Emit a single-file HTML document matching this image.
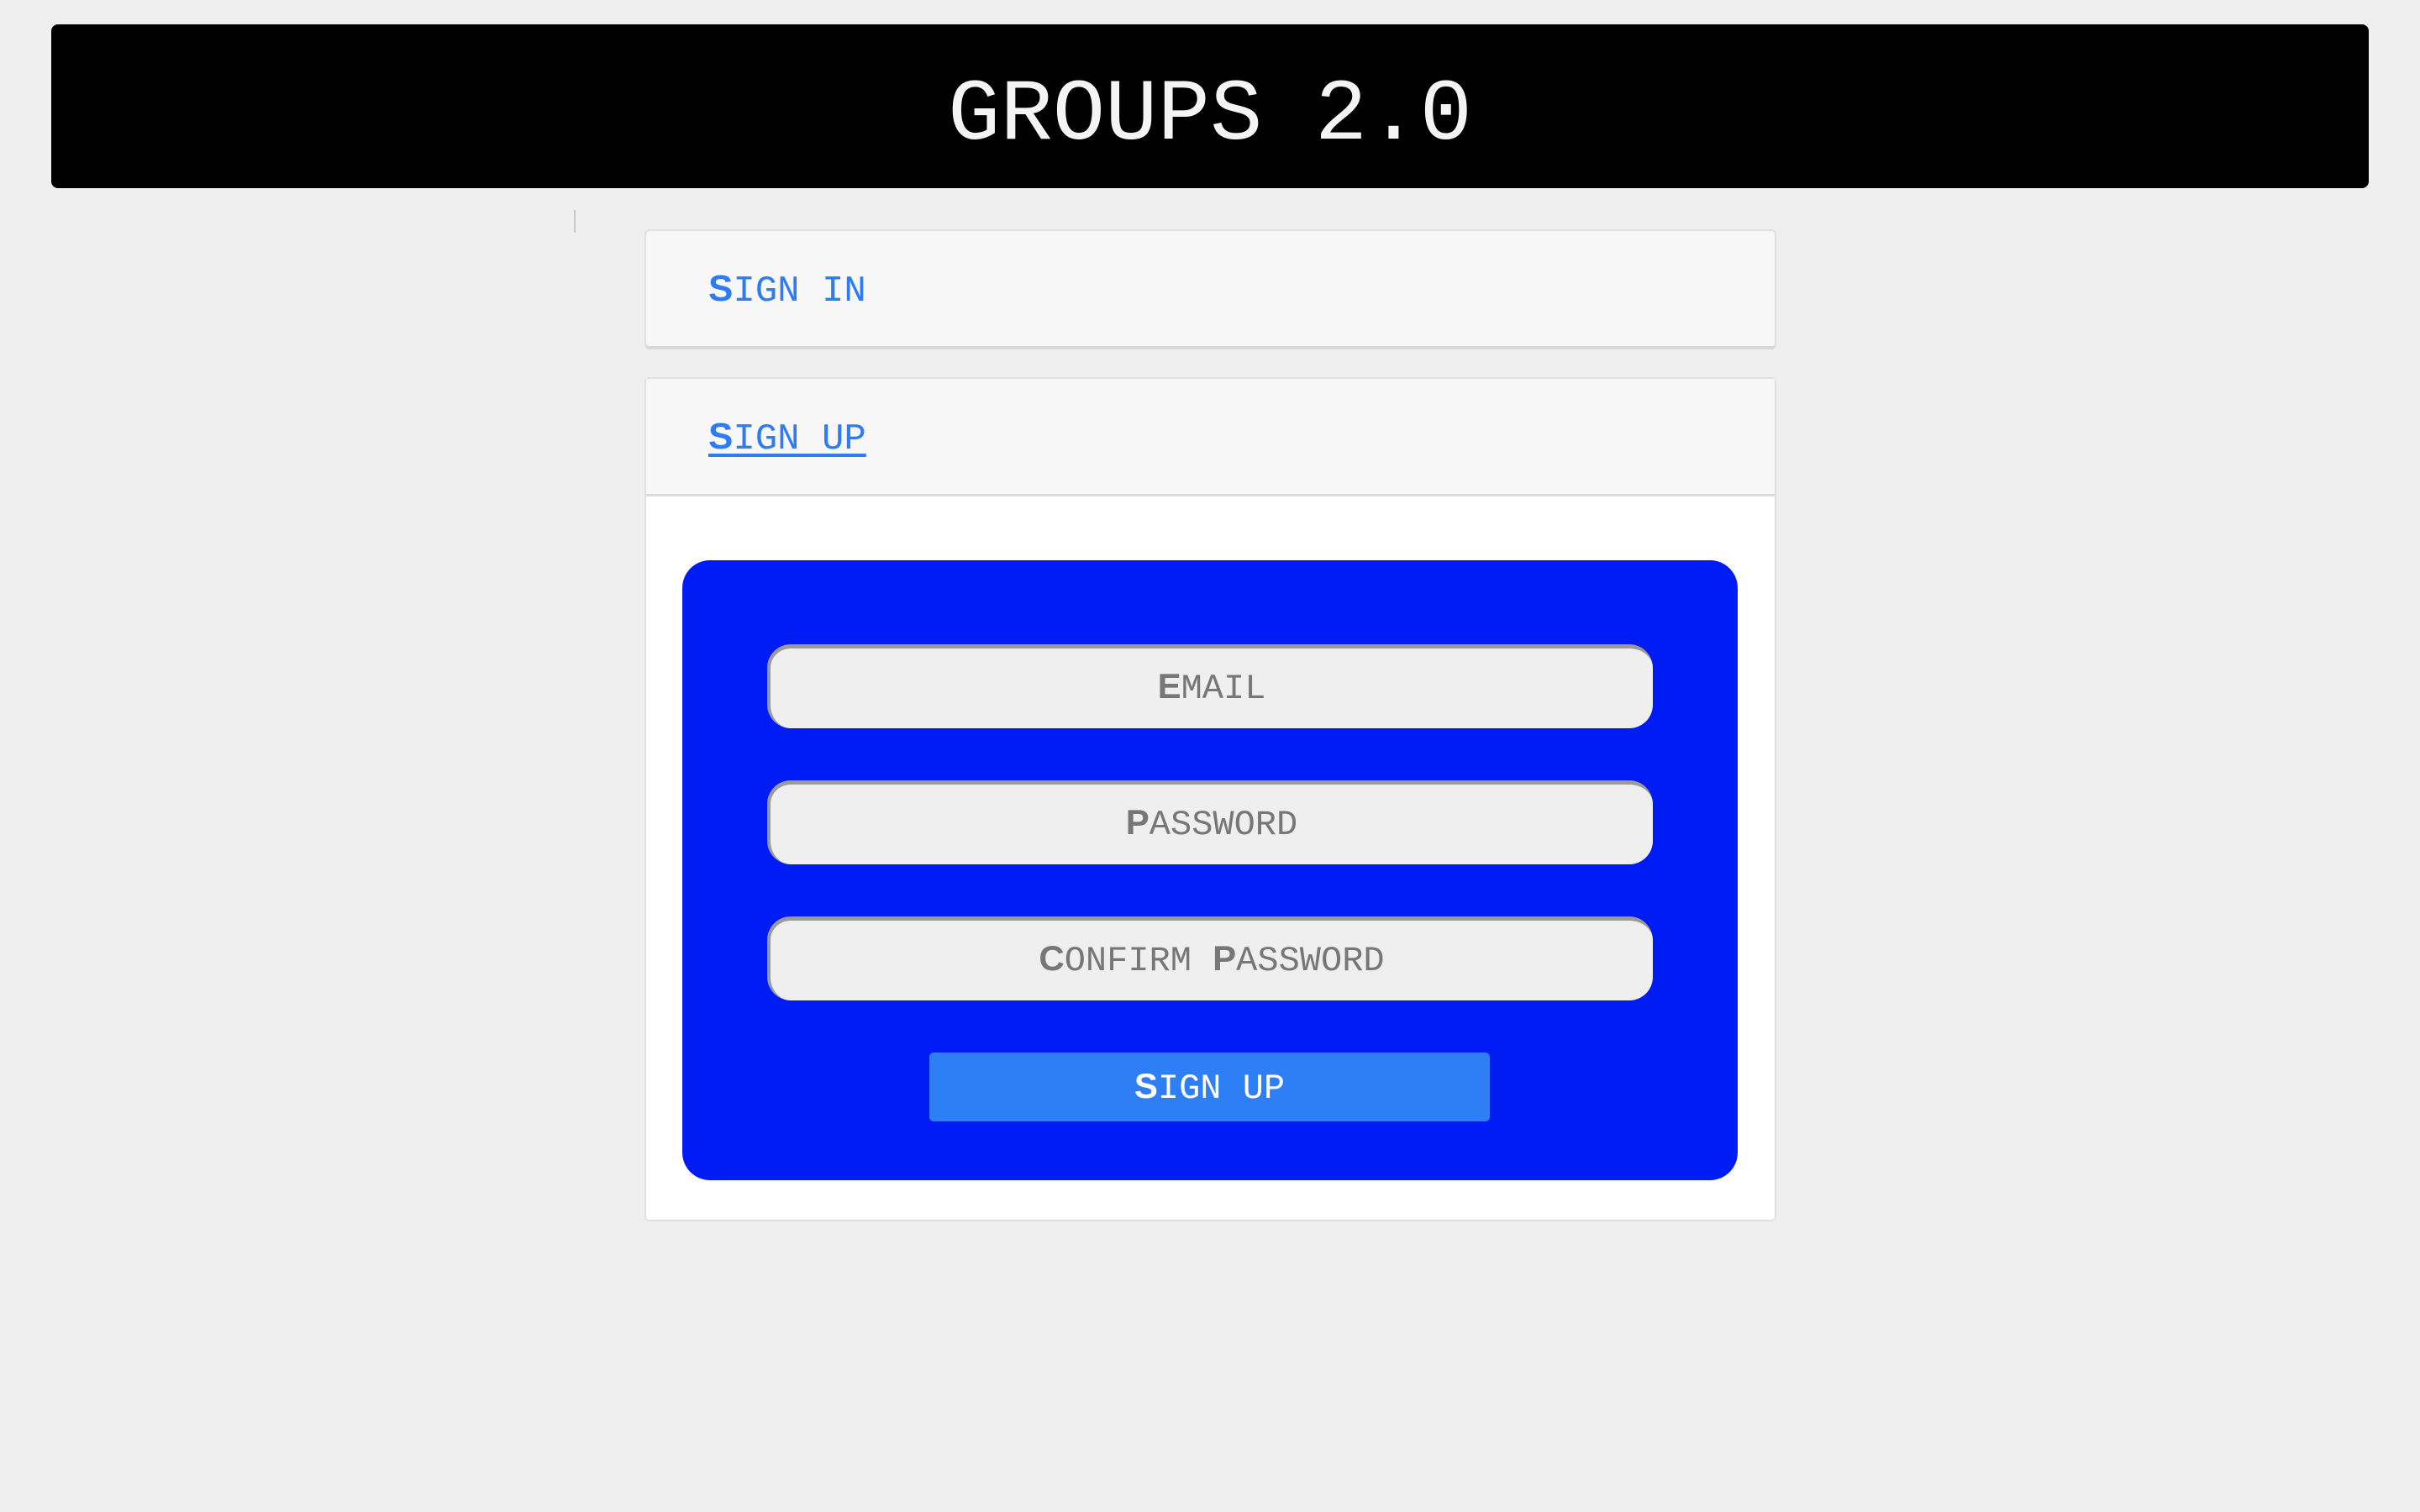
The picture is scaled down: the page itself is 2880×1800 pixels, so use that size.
<!DOCTYPE html>
<html><head><meta charset="utf-8"><style>
html,body{margin:0;padding:0;}
body{width:2880px;height:1800px;background:#efefef;position:relative;overflow:hidden;font-family:"Liberation Mono",monospace;}
.hdr{position:absolute;left:61px;top:29px;width:2758px;height:195px;background:#000;border-radius:8px;}
.hdr div{position:absolute;left:0;right:0;top:56px;text-align:center;color:#f4f4f4;font-size:104px;line-height:106px;font-weight:normal;}
.mark{position:absolute;left:683px;top:250px;width:2px;height:27px;background:#c8c8c8;}
.card{position:absolute;left:767px;width:1347px;background:#f7f7f7;border:2px solid #e0e0e0;border-radius:6px;box-sizing:border-box;}
.lbl{position:absolute;left:74px;color:#2f7cf2;font-size:44px;line-height:44px;}
.lbl b{font-family:"Liberation Sans",sans-serif;font-weight:900;}
.blue{position:absolute;left:812px;top:667px;width:1256px;height:738px;background:#001cf5;border-radius:33px;}
.inp{position:absolute;left:913px;width:1054px;height:100px;background:#efefef;border-radius:28px;border-top:5px solid #9a9a9a;border-left:4px solid #9a9a9a;box-sizing:border-box;color:#777;font-size:42px;line-height:90px;text-align:center;}
.inp b,.btn b{font-family:"Liberation Sans",sans-serif;font-weight:900;}
.btn{position:absolute;left:1106px;top:1253px;width:667px;height:82px;background:#2e7ef5;border-radius:5px;color:#fff;font-size:42px;line-height:80px;text-align:center;}
</style></head><body>
<div class="hdr"><div>GROUPS 2.0</div></div>
<div class="mark"></div>
<div class="card" style="top:273px;height:143px;border-bottom:4px solid #d8d8d8;"><div class="lbl" style="top:47px;"><b>S</b>IGN IN</div></div>
<div class="card" style="top:449px;height:1005px;background:#fff;">
  <div style="position:absolute;left:0;top:0;right:0;height:137px;background:#f7f7f7;border-bottom:3px solid #dcdcdc;"></div>
  <div class="lbl" style="top:47px;text-decoration:underline;text-underline-offset:6px;"><b>S</b>IGN UP</div>
</div>
<div class="blue"></div>
<div class="inp" style="top:767px;"><b>E</b>MAIL</div>
<div class="inp" style="top:929px;"><b>P</b>ASSWORD</div>
<div class="inp" style="top:1091px;"><b>C</b>ONFIRM <b>P</b>ASSWORD</div>
<div class="btn"><b>S</b>IGN UP</div>
</body></html>
